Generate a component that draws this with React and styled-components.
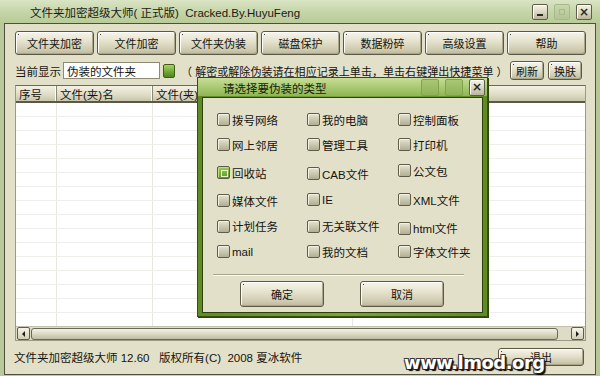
import styled, { createGlobalStyle } from 'styled-components';

const GlobalStyle = createGlobalStyle`
  html, body {
    margin: 0;
    padding: 0;
  }
  body {
    font-family: "Liberation Sans", "Noto Sans CJK SC", sans-serif;
    font-size: 11px;
    color: #141410;
  }
  * { box-sizing: border-box; }
`;

const toolbarItems = ['文件夹加密', '文件加密', '文件夹伪装', '磁盘保护', '数据粉碎', '高级设置', '帮助'];

const columns = [
  { title: '序号', width: 41 },
  { title: '文件(夹)名', width: 96 },
  { title: '文件(夹)位置', width: 200 },
  { title: '', width: 240 },
];

const disguiseOptions = [
  { label: '拨号网络' },
  { label: '我的电脑' },
  { label: '控制面板' },
  { label: '网上邻居' },
  { label: '管理工具' },
  { label: '打印机' },
  { label: '回收站', checked: true },
  { label: 'CAB文件', nudge: 1 },
  { label: '公文包', nudge: -2 },
  { label: '媒体文件' },
  { label: 'IE', nudge: -1 },
  { label: 'XML文件', nudge: -1 },
  { label: '计划任务' },
  { label: '无关联文件' },
  { label: 'html文件', nudge: 2 },
  { label: 'mail' },
  { label: '我的文档' },
  { label: '字体文件夹' },
];

function App() {
  return (
    <>
      <GlobalStyle />
      <Window>
        <TitleBar>
          <TitleText>文件夹加密超级大师( 正式版)&nbsp;&nbsp;Cracked.By.HuyuFeng</TitleText>
          <TitleButtons>
            <CaptionButton>
              <MinGlyph />
            </CaptionButton>
            <CaptionButton $disabled>
              <MaxGlyph />
            </CaptionButton>
            <CaptionButton>
              <CloseGlyph>×</CloseGlyph>
            </CaptionButton>
          </TitleButtons>
        </TitleBar>

        <Panel>
          <Toolbar>
            {toolbarItems.map((item) => (
              <SkinButton key={item} type="button">
                {item}
              </SkinButton>
            ))}
          </Toolbar>

          <FilterRow>
            <FilterLabel>当前显示</FilterLabel>
            <FilterInput>伪装的文件夹</FilterInput>
            <GreenButton />
            <Hint>（ 解密或解除伪装请在相应记录上单击，单击右键弹出快捷菜单 ）</Hint>
            <SmallButtons>
              <SkinButton $small type="button">刷新</SkinButton>
              <SkinButton $small type="button">换肤</SkinButton>
            </SmallButtons>
          </FilterRow>

          <ListView>
            <ListHeader>
              {columns.map((col, i) => (
                <HeaderCell key={i} style={{ width: col.width }} $last={i === columns.length - 1}>
                  {col.title}
                </HeaderCell>
              ))}
            </ListHeader>
            <ListBody>
              {Array.from({ length: 17 }).map((_, r) => (
                <Row key={r}>
                  {columns.map((col, i) => (
                    <Cell key={i} style={{ width: col.width }} />
                  ))}
                </Row>
              ))}
            </ListBody>
            <HScroll>
              <ArrowButton>
                <Arrow $dir="left" />
              </ArrowButton>
              <Thumb />
              <ArrowButton>
                <Arrow $dir="right" />
              </ArrowButton>
            </HScroll>
          </ListView>

          <StatusBar>
            <StatusText>文件夹加密超级大师 12.60&nbsp;&nbsp;&nbsp;版权所有(C)&nbsp;&nbsp;2008 夏冰软件</StatusText>
            <SkinButton $exit type="button">退出</SkinButton>
          </StatusBar>
        </Panel>

        <Dialog>
          <DialogTitle>
            <DialogTitleText>请选择要伪装的类型</DialogTitleText>
            <TitleButtons>
              <DialogCaption />
              <DialogCaption />
              <CaptionButton $small>
                <CloseGlyph>×</CloseGlyph>
              </CaptionButton>
            </TitleButtons>
          </DialogTitle>
          <DialogBody>
            <OptionGrid>
              {disguiseOptions.map((opt) => (
                <Option key={opt.label} $nudge={opt.nudge || 0}>
                  <CheckBox $checked={opt.checked} />
                  <span>{opt.label}</span>
                </Option>
              ))}
            </OptionGrid>
            <Separator />
            <DialogActions>
              <SkinButton $dialog type="button">确定</SkinButton>
              <SkinButton $dialog type="button">取消</SkinButton>
            </DialogActions>
          </DialogBody>
        </Dialog>

        <Watermark>www.lmod.org</Watermark>
      </Window>
    </>
  );
}

const Window = styled.div`
  position: relative;
  width: 600px;
  height: 376px;
  display: flex;
  flex-direction: column;
  overflow: hidden;
  background: linear-gradient(90deg, #b9c99a, #c8d6ab 30%, #c8d6ab 70%, #b6c697);
`;

const TitleBar = styled.div`
  height: 23px;
  display: flex;
  align-items: center;
  padding: 0 8px 0 30px;
  background: linear-gradient(#d9e4c4, #c3d3a5 60%, #b9cb98);
`;

const TitleText = styled.span`
  font-size: 11.5px;
  color: #1a1a14;
  padding-top: 1px;
`;

const TitleButtons = styled.div`
  margin-left: auto;
  display: flex;
  align-items: center;
  gap: 6px;
`;

const CaptionButton = styled.div`
  width: 16px;
  height: ${(p) => (p.$small ? 17 : 16)}px;
  border-radius: 2px;
  display: flex;
  align-items: center;
  justify-content: center;
  border: 1px solid ${(p) => (p.$disabled ? '#a7b98a' : '#5e5e48')};
  background: ${(p) =>
    p.$disabled
      ? 'linear-gradient(#c9d7ae, #b3c494)'
      : 'linear-gradient(#f6f4e8, #d4d1ba 60%, #b9b69c)'};
  box-shadow: ${(p) => (p.$disabled ? 'none' : 'inset 1px 1px 0 #ffffff')};
`;

const MinGlyph = styled.div`
  width: 6px;
  height: 2px;
  margin-top: 6px;
  background: #2a2a20;
`;

const MaxGlyph = styled.div`
  width: 6px;
  height: 6px;
  border: 1px solid #a8ba8a;
`;

const CloseGlyph = styled.span`
  font-family: "DejaVu Sans", sans-serif;
  font-weight: bold;
  font-size: 12px;
  line-height: 1;
  color: #2a2a20;
`;

const Panel = styled.div`
  flex: 1;
  margin: 0 4px 1px 4px;
  border: 1px solid #4f4f3e;
  background: #e3e0c9;
  display: flex;
  flex-direction: column;
  padding: 7px 9px 0 10px;
`;

const Toolbar = styled.div`
  display: grid;
  grid-template-columns: repeat(7, 79px);
  gap: 3px;
  height: 24px;
`;

const SkinButton = styled.button`
  position: relative;
  font: inherit;
  font-size: 11px;
  color: #141410;
  padding: 0;
  height: ${(p) => (p.$small ? 19 : p.$exit ? 18 : p.$dialog ? 26 : 24)}px;
  width: ${(p) => (p.$small ? '34px' : p.$exit ? '86px' : p.$dialog ? '84px' : 'auto')};
  border: 1px solid #5b5946;
  border-radius: 3px;
  background: linear-gradient(#f7f5ea, #e3e0cb 45%, #cfcbb1 80%, #bdb99e);
  box-shadow: inset 1px 1px 0 #ffffff, inset -1px -1px 0 #a9a68c;
  cursor: default;

  &::before {
    content: '';
    position: absolute;
    left: 2px;
    top: 2px;
    width: 1px;
    height: 1px;
    background: #3e3d30;
  }
`;

const FilterRow = styled.div`
  display: flex;
  align-items: center;
  margin-top: 6px;
  height: 19px;
`;

const FilterLabel = styled.span`
  width: 48px;
  font-size: 11.5px;
`;

const FilterInput = styled.div`
  width: 97px;
  height: 17px;
  display: flex;
  align-items: center;
  padding-left: 3px;
  background: #ffffff;
  border: 1px solid #8d8b74;
  font-size: 11.5px;
`;

const GreenButton = styled.div`
  width: 12px;
  height: 14px;
  margin-left: 3px;
  border: 1px solid #3e5e18;
  border-radius: 2px;
  background: linear-gradient(#a9d06a, #6ea532 60%, #4f8420);
`;

const Hint = styled.span`
  margin-left: 6px;
  white-space: nowrap;
  font-size: 11px;
  letter-spacing: 0.05px;
`;

const SmallButtons = styled.div`
  margin-left: auto;
  margin-right: 4px;
  display: flex;
  gap: 4px;
`;

const ListView = styled.div`
  margin-top: 5px;
  height: 256px;
  display: flex;
  flex-direction: column;
  border: 1px solid #9c9a84;
  border-top-color: #6a6856;
  background: #ffffff;
  overflow: hidden;
`;

const ListHeader = styled.div`
  display: flex;
  height: 17px;
  flex-shrink: 0;
  border-bottom: 2px solid #5a5848;
  background: linear-gradient(#f3f1e4, #dedbc4 60%, #c9c6ac);
`;

const HeaderCell = styled.div`
  flex-shrink: 0;
  display: flex;
  align-items: center;
  padding-left: 3px;
  font-size: 11.5px;
  white-space: nowrap;
  overflow: hidden;
  border-right: ${(p) => (p.$last ? 'none' : '1px solid #8a8872')};
  box-shadow: ${(p) => (p.$last ? 'none' : 'inset -1px 0 0 #ffffff')};
`;

const ListBody = styled.div`
  flex: 1;
  overflow: hidden;
`;

const Row = styled.div`
  display: flex;
  height: 14px;
  border-bottom: 1px solid #eeeeea;
`;

const Cell = styled.div`
  flex-shrink: 0;
  border-right: 1px solid #e8e8e2;
`;

const HScroll = styled.div`
  height: 14px;
  flex-shrink: 0;
  display: flex;
  align-items: center;
  gap: 1px;
  padding: 0 1px;
  background: #dedbc6;
  border-top: 1px solid #c4c1aa;
`;

const ArrowButton = styled.div`
  width: 13px;
  height: 13px;
  display: flex;
  align-items: center;
  justify-content: center;
  border: 1px solid #5e5c4a;
  border-radius: 2px;
  background: linear-gradient(#f6f4e8, #d2cfb6);
`;

const Arrow = styled.div`
  width: 0;
  height: 0;
  border-top: 3px solid transparent;
  border-bottom: 3px solid transparent;
  ${(p) =>
    p.$dir === 'left' ? 'border-right: 3px solid #1e1e18;' : 'border-left: 3px solid #1e1e18;'}
`;

const Thumb = styled.div`
  flex: 1;
  height: 12px;
  margin-right: 12px;
  border: 1px solid #6a6856;
  border-radius: 3px;
  background: linear-gradient(#f3f1e4, #dcd9c2 50%, #bfbca2);
`;

const StatusBar = styled.div`
  flex: 1;
  display: flex;
  align-items: center;
  justify-content: space-between;
  padding: 0 2px 2px 0;
`;

const StatusText = styled.span`
  font-size: 11.5px;
  margin-left: -1px;
`;

const Dialog = styled.div`
  position: absolute;
  left: 197px;
  top: 77px;
  width: 291px;
  height: 240px;
  display: flex;
  flex-direction: column;
  padding: 0 4px 3px 4px;
  border: 1px solid #34500f;
  background: linear-gradient(90deg, #5f8a24, #7aa33a 50%, #5f8a24);
  box-shadow: 1px 1px 0 #2f4510;
`;

const DialogTitle = styled.div`
  height: 21px;
  display: flex;
  align-items: center;
  padding: 0 2px 0 25px;
  margin: 0 -4px;
  background: linear-gradient(#c8dd98, #a8c870 55%, #8fb652);
`;

const DialogTitleText = styled.span`
  font-size: 11.5px;
  color: #15200a;
  padding-top: 1px;
`;

const DialogCaption = styled.div`
  width: 18px;
  height: 17px;
  border-radius: 2px;
  border: 1px solid #7fa24a;
  background: linear-gradient(#a9c776, #8fb257);
`;

const DialogBody = styled.div`
  flex: 1;
  display: flex;
  flex-direction: column;
  margin-top: 1px;
  border: 1px solid #2c420d;
  background: #e3e0c9;
  padding: 9px 9px 5px 14px;
`;

const OptionGrid = styled.div`
  display: grid;
  grid-template-columns: 90px 91px 1fr;
  grid-template-rows: 25px 25px 31px 25px 26px 25px;
`;

const Option = styled.label`
  display: flex;
  align-items: center;
  gap: 2px;
  font-size: 11.5px;
  white-space: nowrap;
  transform: translateY(${(p) => p.$nudge}px);
`;

const CheckBox = styled.span`
  position: relative;
  width: 13px;
  height: 13px;
  flex-shrink: 0;
  border: 1px solid #5f5d4a;
  border-radius: 2px;
  background: ${(p) =>
    p.$checked
      ? 'linear-gradient(#9ccc5a, #5f9a26)'
      : 'linear-gradient(#e6e3d0, #c6c3aa 60%, #b1ae94)'};
  box-shadow: inset 1px 1px 0 ${(p) => (p.$checked ? '#b9de82' : '#f4f2e6')};

  &::after {
    content: '';
    display: ${(p) => (p.$checked ? 'block' : 'none')};
    position: absolute;
    left: 3px;
    top: 3px;
    width: 5px;
    height: 5px;
    border: 1px solid #e6f2c8;
  }
`;

const Separator = styled.div`
  margin: 10px 9px 0 -4px;
  height: 2px;
  border-top: 1px solid #a8a58e;
  border-bottom: 1px solid #fbfaf2;
`;

const DialogActions = styled.div`
  display: flex;
  justify-content: center;
  gap: 36px;
  margin: 5px 0 0 -6px;
`;

const Watermark = styled.div`
  position: absolute;
  left: 404px;
  top: 352px;
  font-family: "DejaVu Sans", sans-serif;
  font-weight: bold;
  font-size: 18px;
  letter-spacing: -0.5px;
  color: #ffffff;
  text-shadow: 1px 1px 0 #1c1c1c, -1px -1px 0 #3a3a3a, 1px -1px 0 #3a3a3a, -1px 1px 0 #3a3a3a, 2px 2px 1px #000000;
`;

export default App;
